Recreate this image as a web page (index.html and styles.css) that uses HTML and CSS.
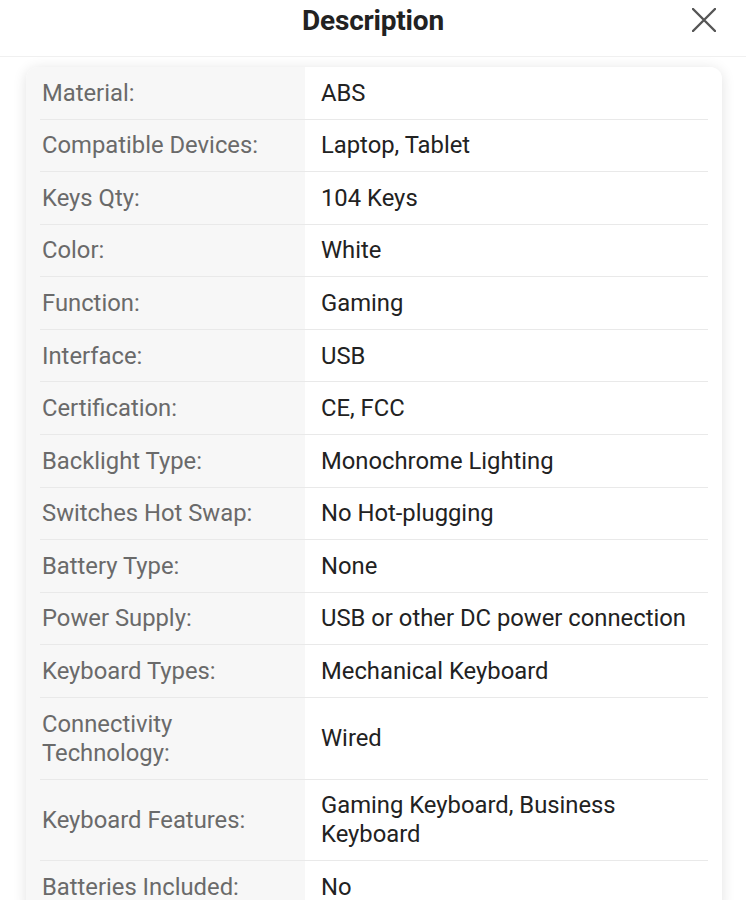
FILE: index.html
```html
<!DOCTYPE html>
<html lang="en">
<head>
<meta charset="utf-8">
<title>Description</title>
<link rel="stylesheet" href="styles.css">
</head>
<body>
<header class="header">
  <span></span>
  <h1 class="title">Description</h1>
  <button class="close" aria-label="Close">
    <svg width="24" height="24" viewBox="0 0 24 24"><path d="M1 1 L23 23 M23 1 L1 23" stroke="#555" stroke-width="2.4" fill="none" stroke-linecap="round"/></svg>
  </button>
</header>
<main class="card">
  <div class="row"><div class="label">Material:</div><div class="value">ABS</div></div>
  <div class="row"><div class="label">Compatible Devices:</div><div class="value">Laptop, Tablet</div></div>
  <div class="row"><div class="label">Keys Qty:</div><div class="value">104 Keys</div></div>
  <div class="row"><div class="label">Color:</div><div class="value">White</div></div>
  <div class="row"><div class="label">Function:</div><div class="value">Gaming</div></div>
  <div class="row"><div class="label">Interface:</div><div class="value">USB</div></div>
  <div class="row"><div class="label">Certification:</div><div class="value">CE, FCC</div></div>
  <div class="row"><div class="label">Backlight Type:</div><div class="value">Monochrome Lighting</div></div>
  <div class="row"><div class="label">Switches Hot Swap:</div><div class="value">No Hot-plugging</div></div>
  <div class="row"><div class="label">Battery Type:</div><div class="value">None</div></div>
  <div class="row"><div class="label">Power Supply:</div><div class="value">USB or other DC power connection</div></div>
  <div class="row"><div class="label">Keyboard Types:</div><div class="value">Mechanical Keyboard</div></div>
  <div class="row"><div class="label">Connectivity<br>Technology:</div><div class="value">Wired</div></div>
  <div class="row"><div class="label">Keyboard Features:</div><div class="value">Gaming Keyboard, Business<br>Keyboard</div></div>
  <div class="row"><div class="label">Batteries Included:</div><div class="value">No</div></div>
</main>
</body>
</html>
```
FILE: styles.css
```css
html, body {
  margin: 0;
  padding: 0;
  background: #ffffff;
  font-family: Roboto, "Liberation Sans", sans-serif;
}
body {
  overflow: hidden;
  height: 900px;
}
.header {
  height: 56px;
  display: grid;
  grid-template-columns: 1fr auto 1fr;
  align-items: center;
  border-bottom: 1px solid #f0f0f0;
  background: #fff;
}
.title {
  margin: 0;
  font-size: 28px;
  font-weight: 700;
  color: #222;
  letter-spacing: -0.2px;
  position: relative;
  top: -8px;
}
.close {
  justify-self: end;
  margin-right: 30px;
  border: 0;
  background: transparent;
  padding: 0;
  width: 24px;
  height: 24px;
  position: relative;
  top: -8px;
  cursor: pointer;
}
.card {
  margin: 10px 24px 0 26px;
  border-radius: 12px;
  background: linear-gradient(to right, #f7f7f7 279px, #ffffff 279px);
  box-shadow: 0 2px 14px rgba(0, 0, 0, 0.12);
  overflow: hidden;
}
.row {
  display: grid;
  grid-template-columns: 265px 1fr;
  align-items: center;
  margin: 0 14px;
  padding: 11.7px 0 10.9px;
  border-bottom: 1px solid #e9e9e9;
  font-size: 23.8px;
  line-height: 29px;
}
.label {
  padding-left: 2px;
  color: #6a6a6a;
}
.value {
  padding-left: 16px;
  color: #222;
}
```
